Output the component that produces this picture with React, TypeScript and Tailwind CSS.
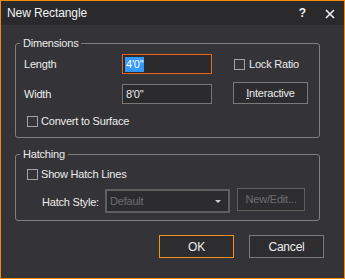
import React from "react";

function Check({ label, gap = "ml-[3px]" }: { label: string; gap?: string }) {
  return (
    <div className="flex items-center h-[13px]">
      <span className="w-[11px] h-[11px] border border-[#a3a3a3] shrink-0" />
      <span className={`${gap} leading-[13px]`}>{label}</span>
    </div>
  );
}

export default function App() {
  return (
    <div className="w-[345px] h-[279px] border border-[#f28a0c] bg-[#343438] flex flex-col text-[#ececec] text-[11px] tracking-[-0.2px] font-['Liberation_Sans',Arial,sans-serif]">
      {/* title bar */}
      <div className="h-[24px] shrink-0 bg-[#2a2a2d] flex items-center pl-[6px] pr-[9px]">
        <span className="text-[12px] tracking-[-0.1px] text-[#f2f2f2]">New Rectangle</span>
        <span className="ml-auto text-[12px] font-bold text-[#f2f2f2] mr-[19px]">?</span>
        <svg width="10" height="10" viewBox="0 0 10 10" className="mt-[1px]">
          <path d="M1 1 L9 9 M9 1 L1 9" stroke="#f2f2f2" strokeWidth="1.6" />
        </svg>
      </div>

      <div className="flex flex-col px-[14px]">
        {/* Dimensions */}
        <fieldset className="w-[305px] border border-[#7e7e7e] rounded-[3px] mt-[11px] p-0 m-0">
          <legend className="ml-[4px] px-[3px] h-[14px] leading-[14px]">Dimensions</legend>
          <div className="flex flex-col pl-[8px] pb-[9px]">
            <div className="flex items-center h-[22px] mt-[3px]">
              <span className="w-[98px]">Length</span>
              <div className="w-[90px] h-[20px] border border-[#f0651e] bg-[#2b2b2d] flex items-center pl-[2px]">
                <span className="bg-[#3399ff] text-white h-[15px] leading-[15px] px-[1px]">4'0"</span>
              </div>
              <div className="ml-[22px]">
                <Check label="Lock Ratio" gap="ml-[4px]" />
              </div>
            </div>
            <div className="flex items-center h-[24px] mt-[7px]">
              <span className="w-[98px]">Width</span>
              <div className="w-[90px] h-[20px] border border-[#777777] bg-[#2b2b2d] flex items-center pl-[3px]">
                <span>8'0"</span>
              </div>
              <button className="ml-[21px] self-start w-[75px] h-[22px] border border-[#7a7a7a] bg-[#2d2d30] text-[#ececec] flex items-center justify-center">
                <span><u>I</u>nteractive</span>
              </button>
            </div>
            <div className="mt-[9px] ml-[3px]">
              <Check label="Convert to Surface" />
            </div>
          </div>
        </fieldset>

        {/* Hatching */}
        <fieldset className="w-[305px] border border-[#7e7e7e] rounded-[3px] mt-[9px] p-0 m-0">
          <legend className="ml-[4px] px-[3px] h-[14px] leading-[14px]">Hatching</legend>
          <div className="flex flex-col pl-[8px] pb-[7px]">
            <div className="mt-[7px] ml-[3px]">
              <Check label="Show Hatch Lines" />
            </div>
            <div className="flex items-start h-[25px] mt-[7px]">
              <span className="ml-[18px] w-[63px] mt-[6px]">Hatch Style:</span>
              <div className="mt-[1px] w-[125px] h-[24px] border-2 border-[#5f5f5f] bg-[#2c2c2e] flex items-center pl-[3px] pr-[7px]">
                <span className="text-[#6e6e6e]">Default</span>
                <svg width="6" height="3" viewBox="0 0 6 3" className="ml-auto">
                  <path d="M0 0 H6 L3 3 Z" fill="#cfcfcf" />
                </svg>
              </div>
              <button className="ml-[7px] w-[68px] h-[23px] border border-[#5f5f5f] bg-[#2d2d30] text-[#6e6e6e] flex items-center justify-center">
                New/Edit...
              </button>
            </div>
          </div>
        </fieldset>

        {/* buttons */}
        <div className="flex justify-end gap-[15px] pr-[6px] mt-[14px]">
          <button className="w-[75px] h-[23px] border border-[#f5901e] bg-[#2d2d30] text-[#ececec] text-[12px] flex items-center justify-center">
            OK
          </button>
          <button className="w-[75px] h-[23px] border border-[#7a7a7a] bg-[#2d2d30] text-[#ececec] text-[12px] flex items-center justify-center">
            Cancel
          </button>
        </div>
      </div>
    </div>
  );
}
